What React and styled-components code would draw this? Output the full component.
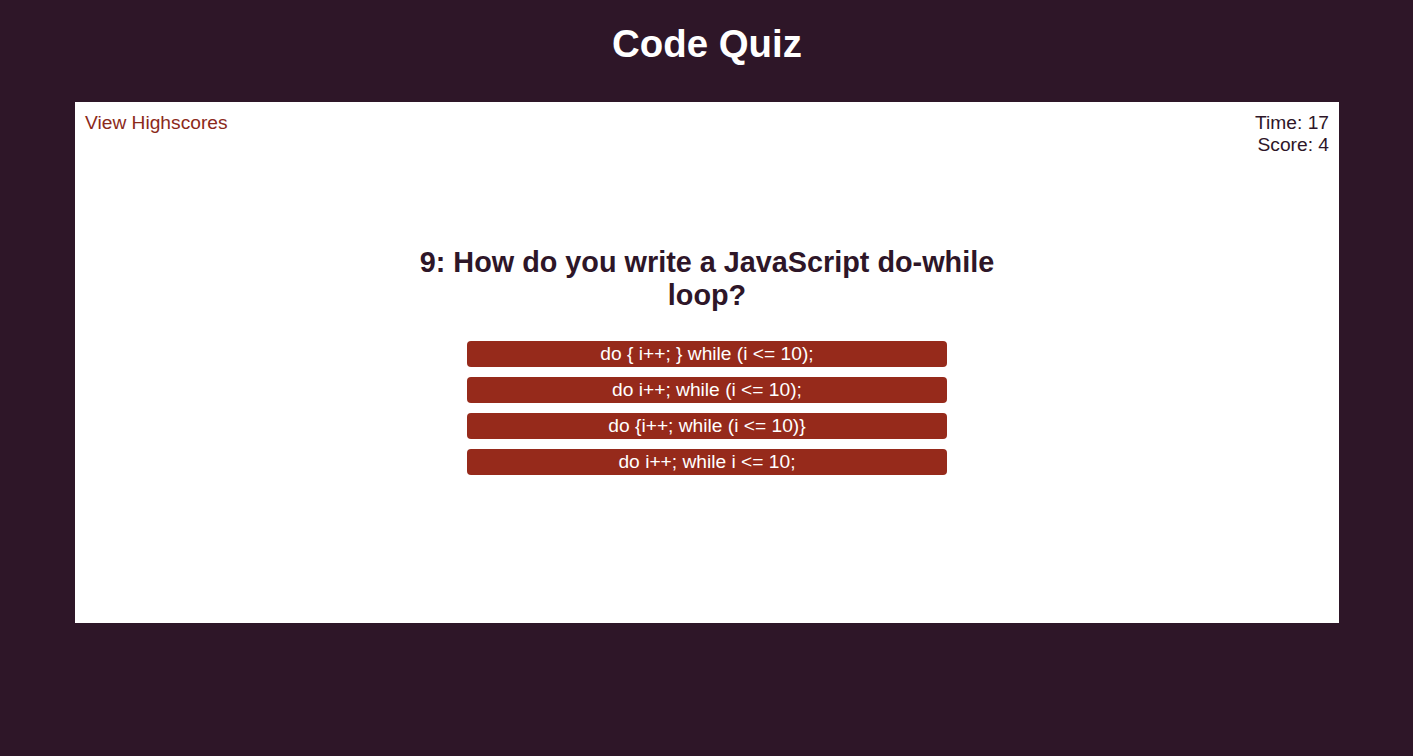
import React from 'react'
import styled, { createGlobalStyle } from 'styled-components'

const questions = [
    'do { i++; } while (i <= 10);',
    'do i++; while (i <= 10);',
    'do {i++; while (i <= 10)}',
    'do i++; while i <= 10;',
]

function App() {
    return (
        <>
            <GlobalStyle />
            <Page>
                <Title>Code Quiz</Title>
                <Card>
                    <TopBar>
                        <HighscoreLink href="#">View Highscores</HighscoreLink>
                        <Stats>
                            <span>Time: 17</span>
                            <span>Score: 4</span>
                        </Stats>
                    </TopBar>
                    <Quiz>
                        <Question>9: How do you write a JavaScript do-while loop?</Question>
                        <Answers>
                            {questions.map((q, index) =>
                                <AnswerButton key={index}>{q}</AnswerButton>
                            )}
                        </Answers>
                    </Quiz>
                </Card>
            </Page>
        </>
    )
}

export default App

const GlobalStyle = createGlobalStyle`
    html, body {
        margin: 0;
        padding: 0;
        background: #2e1628;
        font-family: "Liberation Sans", Arial, sans-serif;
    }
`

const Page = styled.div`
    min-height: 756px;
    background: #2e1628;
    padding: 0 74px 0 75px;
    box-sizing: border-box;
`

const Title = styled.h1`
    margin: 0;
    padding: 22px 0 36px;
    font-size: 38.4px;
    line-height: 44px;
    font-weight: 700;
    color: #fff;
    text-align: center;
`

const Card = styled.div`
    background: #fff;
    height: 521px;
    box-sizing: border-box;
    padding: 10px 10px;
`

const TopBar = styled.div`
    display: flex;
    justify-content: space-between;
    align-items: flex-start;
    font-size: 19.2px;
    line-height: 22px;
`

const HighscoreLink = styled.a`
    color: #8c2a1a;
    text-decoration: none;
`

const Stats = styled.div`
    display: flex;
    flex-direction: column;
    align-items: flex-end;
    color: #2e1628;
`

const Quiz = styled.div`
    display: flex;
    flex-direction: column;
    align-items: center;
    padding-top: 90px;
`

const Question = styled.h2`
    margin: 0 0 29px;
    max-width: 600px;
    font-size: 28.8px;
    line-height: 33px;
    font-weight: 700;
    color: #2e1628;
    text-align: center;
`

const Answers = styled.div`
    display: flex;
    flex-direction: column;
    gap: 10px;
    width: 480px;
`

const AnswerButton = styled.button`
    height: 26px;
    border: none;
    border-radius: 4px;
    background: #962a1b;
    color: #fff;
    font-family: "Liberation Sans", Arial, sans-serif;
    font-size: 19.2px;
    line-height: 26px;
    padding: 0;
    cursor: pointer;
`
